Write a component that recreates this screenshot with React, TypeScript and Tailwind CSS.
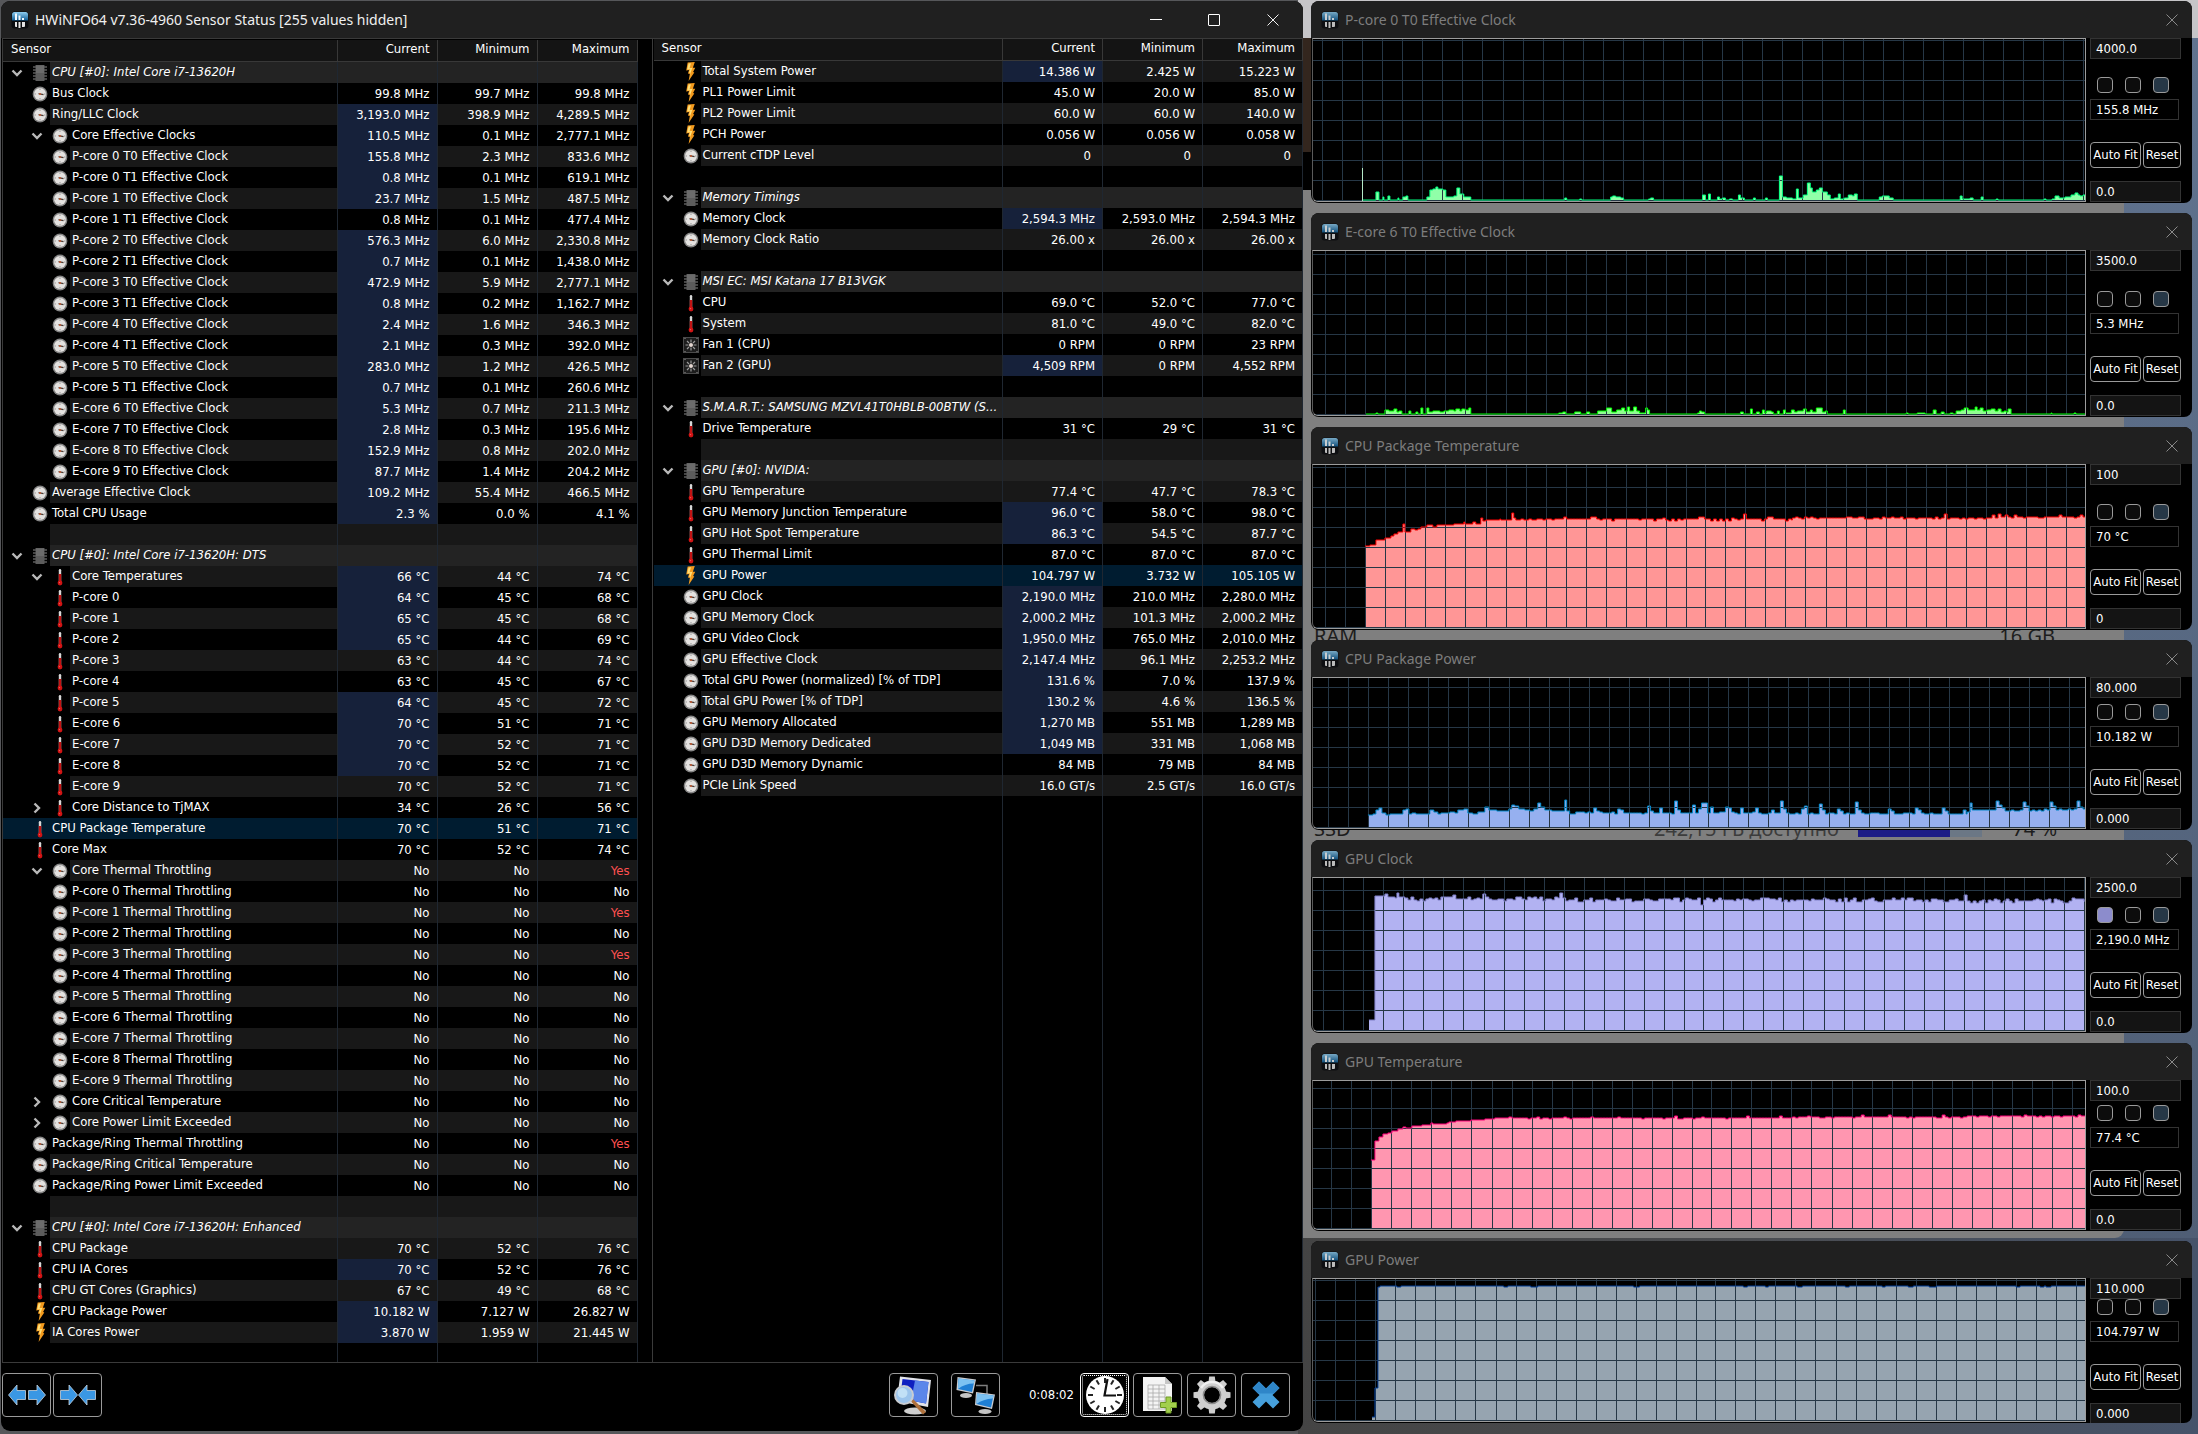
import React from "react";

/* ---------- sensor data: level | icon | name | current | minimum | maximum | flags ----------
   icons: h = chip heading, c = clock, t = thermometer, p = power, f = fan
   flags: b = highlighted current value, v = expanded, > = collapsed, s = selected, w = warning maximum */

const LEFT = `0|h|CPU [#0]: Intel Core i7-13620H||||v
0|c|Bus Clock|99.8 MHz|99.7 MHz|99.8 MHz|
0|c|Ring/LLC Clock|3,193.0 MHz|398.9 MHz|4,289.5 MHz|b
1|c|Core Effective Clocks|110.5 MHz|0.1 MHz|2,777.1 MHz|bv
1|c|P-core 0 T0 Effective Clock|155.8 MHz|2.3 MHz|833.6 MHz|b
1|c|P-core 0 T1 Effective Clock|0.8 MHz|0.1 MHz|619.1 MHz|b
1|c|P-core 1 T0 Effective Clock|23.7 MHz|1.5 MHz|487.5 MHz|b
1|c|P-core 1 T1 Effective Clock|0.8 MHz|0.1 MHz|477.4 MHz|
1|c|P-core 2 T0 Effective Clock|576.3 MHz|6.0 MHz|2,330.8 MHz|b
1|c|P-core 2 T1 Effective Clock|0.7 MHz|0.1 MHz|1,438.0 MHz|b
1|c|P-core 3 T0 Effective Clock|472.9 MHz|5.9 MHz|2,777.1 MHz|b
1|c|P-core 3 T1 Effective Clock|0.8 MHz|0.2 MHz|1,162.7 MHz|b
1|c|P-core 4 T0 Effective Clock|2.4 MHz|1.6 MHz|346.3 MHz|b
1|c|P-core 4 T1 Effective Clock|2.1 MHz|0.3 MHz|392.0 MHz|b
1|c|P-core 5 T0 Effective Clock|283.0 MHz|1.2 MHz|426.5 MHz|b
1|c|P-core 5 T1 Effective Clock|0.7 MHz|0.1 MHz|260.6 MHz|b
1|c|E-core 6 T0 Effective Clock|5.3 MHz|0.7 MHz|211.3 MHz|b
1|c|E-core 7 T0 Effective Clock|2.8 MHz|0.3 MHz|195.6 MHz|b
1|c|E-core 8 T0 Effective Clock|152.9 MHz|0.8 MHz|202.0 MHz|b
1|c|E-core 9 T0 Effective Clock|87.7 MHz|1.4 MHz|204.2 MHz|b
0|c|Average Effective Clock|109.2 MHz|55.4 MHz|466.5 MHz|b
0|c|Total CPU Usage|2.3 %|0.0 %|4.1 %|b
-
0|h|CPU [#0]: Intel Core i7-13620H: DTS||||v
1|t|Core Temperatures|66 °C|44 °C|74 °C|bv
1|t|P-core 0|64 °C|45 °C|68 °C|b
1|t|P-core 1|65 °C|45 °C|68 °C|b
1|t|P-core 2|65 °C|44 °C|69 °C|b
1|t|P-core 3|63 °C|44 °C|74 °C|
1|t|P-core 4|63 °C|45 °C|67 °C|
1|t|P-core 5|64 °C|45 °C|72 °C|b
1|t|E-core 6|70 °C|51 °C|71 °C|b
1|t|E-core 7|70 °C|52 °C|71 °C|b
1|t|E-core 8|70 °C|52 °C|71 °C|b
1|t|E-core 9|70 °C|52 °C|71 °C|
1|t|Core Distance to TjMAX|34 °C|26 °C|56 °C|>
0|t|CPU Package Temperature|70 °C|51 °C|71 °C|s
0|t|Core Max|70 °C|52 °C|74 °C|
1|c|Core Thermal Throttling|No|No|Yes|vw
1|c|P-core 0 Thermal Throttling|No|No|No|
1|c|P-core 1 Thermal Throttling|No|No|Yes|w
1|c|P-core 2 Thermal Throttling|No|No|No|
1|c|P-core 3 Thermal Throttling|No|No|Yes|w
1|c|P-core 4 Thermal Throttling|No|No|No|
1|c|P-core 5 Thermal Throttling|No|No|No|
1|c|E-core 6 Thermal Throttling|No|No|No|
1|c|E-core 7 Thermal Throttling|No|No|No|
1|c|E-core 8 Thermal Throttling|No|No|No|
1|c|E-core 9 Thermal Throttling|No|No|No|
1|c|Core Critical Temperature|No|No|No|>
1|c|Core Power Limit Exceeded|No|No|No|>
0|c|Package/Ring Thermal Throttling|No|No|Yes|w
0|c|Package/Ring Critical Temperature|No|No|No|
0|c|Package/Ring Power Limit Exceeded|No|No|No|
-
0|h|CPU [#0]: Intel Core i7-13620H: Enhanced||||v
0|t|CPU Package|70 °C|52 °C|76 °C|
0|t|CPU IA Cores|70 °C|52 °C|76 °C|b
0|t|CPU GT Cores (Graphics)|67 °C|49 °C|68 °C|
0|p|CPU Package Power|10.182 W|7.127 W|26.827 W|b
0|p|IA Cores Power|3.870 W|1.959 W|21.445 W|b`;

const RIGHT = `0|p|Total System Power|14.386 W|2.425 W|15.223 W|b
0|p|PL1 Power Limit|45.0 W|20.0 W|85.0 W|
0|p|PL2 Power Limit|60.0 W|60.0 W|140.0 W|
0|p|PCH Power|0.056 W|0.056 W|0.058 W|
0|c|Current cTDP Level|0|0|0|
-
0|h|Memory Timings||||v
0|c|Memory Clock|2,594.3 MHz|2,593.0 MHz|2,594.3 MHz|b
0|c|Memory Clock Ratio|26.00 x|26.00 x|26.00 x|
-
0|h|MSI EC: MSI Katana 17 B13VGK||||v
0|t|CPU|69.0 °C|52.0 °C|77.0 °C|
0|t|System|81.0 °C|49.0 °C|82.0 °C|
0|f|Fan 1 (CPU)|0 RPM|0 RPM|23 RPM|
0|f|Fan 2 (GPU)|4,509 RPM|0 RPM|4,552 RPM|b
-
0|h|S.M.A.R.T.: SAMSUNG MZVL41T0HBLB-00BTW (S...||||v
0|t|Drive Temperature|31 °C|29 °C|31 °C|
-
0|h|GPU [#0]: NVIDIA:||||v
0|t|GPU Temperature|77.4 °C|47.7 °C|78.3 °C|
0|t|GPU Memory Junction Temperature|96.0 °C|58.0 °C|98.0 °C|b
0|t|GPU Hot Spot Temperature|86.3 °C|54.5 °C|87.7 °C|b
0|t|GPU Thermal Limit|87.0 °C|87.0 °C|87.0 °C|
0|p|GPU Power|104.797 W|3.732 W|105.105 W|s
0|c|GPU Clock|2,190.0 MHz|210.0 MHz|2,280.0 MHz|b
0|c|GPU Memory Clock|2,000.2 MHz|101.3 MHz|2,000.2 MHz|b
0|c|GPU Video Clock|1,950.0 MHz|765.0 MHz|2,010.0 MHz|b
0|c|GPU Effective Clock|2,147.4 MHz|96.1 MHz|2,253.2 MHz|b
0|c|Total GPU Power (normalized) [% of TDP]|131.6 %|7.0 %|137.9 %|b
0|c|Total GPU Power [% of TDP]|130.2 %|4.6 %|136.5 %|b
0|c|GPU Memory Allocated|1,270 MB|551 MB|1,289 MB|b
0|c|GPU D3D Memory Dedicated|1,049 MB|331 MB|1,068 MB|b
0|c|GPU D3D Memory Dynamic|84 MB|79 MB|84 MB|
0|c|PCIe Link Speed|16.0 GT/s|2.5 GT/s|16.0 GT/s|`;

/* ---------- icons ---------- */

function AppIcon({ dim }: { dim?: boolean }) {
  return (
    <svg viewBox="0 0 18 18" className={dim ? "size-[18px] shrink-0 opacity-80" : "size-[18px] shrink-0"} aria-hidden="true">
      <defs>
        <linearGradient id="app-top" x1="0" y1="0" x2="0" y2="1">
          <stop offset="0" stopColor="#8ecdf0" />
          <stop offset="1" stopColor="#0f5b92" />
        </linearGradient>
      </defs>
      <rect x="0.5" y="0.5" width="17" height="17" rx="3" fill="#0a0c0f" />
      <path d="M1 9.500V3.500Q1 1 3.500 1h11Q17 1 17 3.500v6z" fill="url(#app-top)" />
      <path d="M4 2.500h2V9H4zM7.500 4.500h2V9h-2zM11 7h2v2h-2z" fill="#f2f9fd" />
      <path d="M4 11h2v5H5q-1 0-1-1zM7.500 11h2v6h-2zM11 11h3v4q0 1-1 1h-2z" fill="#e4e4e4" />
    </svg>
  );
}

function ChipIcon() {
  return (
    <svg viewBox="0 0 14 18" className="h-[18px] w-[14px]" aria-hidden="true">
      <path d="M0 3h14M0 6h14M0 9h14M0 12h14M0 15h14" stroke="#8a8a8a" strokeWidth="1.200" />
      <rect x="2.500" y="1" width="9" height="16" fill="#5c5c5c" />
      <path d="M3 1.500h8V9H3z" fill="#6b6b6b" />
    </svg>
  );
}

function ClockIcon() {
  return (
    <svg viewBox="0 0 16 16" className="size-4" aria-hidden="true">
      <circle cx="8" cy="8" r="7.400" fill="#858585" />
      <circle cx="8" cy="8" r="6" fill="#e4e2e0" />
      <path d="M8 2.500v1.500M8 12v1.500M2.500 8H4M12 8h1.500" stroke="#999" strokeWidth="1" />
      <path d="M6.500 7.600 11.500 8.600" stroke="#4a3a32" strokeWidth="1.300" />
      <circle cx="8" cy="8" r="1" fill="#c4572f" />
    </svg>
  );
}

function ThermometerIcon() {
  return (
    <svg viewBox="0 0 6 18" className="h-[18px] w-[6px]" aria-hidden="true">
      <rect x="1.800" y="1" width="2.400" height="13" rx="1.200" fill="#d8d8d8" />
      <rect x="1.800" y="6" width="2.400" height="9" fill="#c41414" />
      <circle cx="3" cy="15" r="2.400" fill="#d01414" />
      <circle cx="2.500" cy="14.600" r="0.700" fill="#f06060" />
    </svg>
  );
}

function BoltIcon() {
  return (
    <svg viewBox="0 0 11 20" className="h-[19px] w-[11px]" aria-hidden="true">
      <path d="M2.500 0.500 10 0 8 6h2.500L8.200 10.500 9.500 11 3.500 20l1.300-7.500L2.800 12 4 8.500 1 9z" fill="#f39a1d" />
      <path d="M3.500 1.500 6 1.300 4.500 6.500l3-.5-2.500 7 .5.500-1 4 1.200-6L3.800 11l1.500-3.500L2 8z" fill="#ffe07a" />
    </svg>
  );
}

function FanIcon() {
  return (
    <svg viewBox="0 0 16 16" className="size-4" aria-hidden="true">
      <rect x="0.500" y="0.500" width="15" height="15" fill="#1d1d1d" stroke="#4b4b4b" />
      <path d="M8 2.500v3M8 10.500v3M2.500 8h3M10.500 8h3M4 4l2 2M10 10l2 2M12 4l-2 2M6 10l-2 2" stroke="#9a9a9a" strokeWidth="1.200" />
      <circle cx="8" cy="8" r="2" fill="#e6d8d2" />
      <path d="M1.500 1.500h1M13.500 1.500h1M1.500 14.500h1M13.500 14.500h1" stroke="#999" />
    </svg>
  );
}

function Chevron({ open }: { open: boolean }) {
  return (
    <svg viewBox="0 0 12 12" className="size-3" fill="none" stroke="#b9b9b9" strokeWidth="2.400" aria-hidden="true">
      <path d={open ? "M1.500 3.500 6 8l4.500-4.500" : "M3.500 1.500 8 6l-4.500 4.500"} />
    </svg>
  );
}

function CloseGlyph({ size }: { size: string }) {
  return (
    <svg viewBox="0 0 12 12" className={size} fill="none" stroke="currentColor" strokeWidth="1" aria-hidden="true">
      <path d="M0.500 0.500l11 11M11.500 0.500l-11 11" />
    </svg>
  );
}

function RowIcon({ kind }: { kind: string }) {
  if (kind === "h") return <ChipIcon />;
  if (kind === "c") return <ClockIcon />;
  if (kind === "t") return <ThermometerIcon />;
  if (kind === "p") return <BoltIcon />;
  return <FanIcon />;
}

/* ---------- sensor table ---------- */

const LINE = "border-r border-[#1f2731]";
const VALUE_COLS = [0, 1, 2];

function SensorRow({ line, index }: { line: string; index: number }) {
  const shade = index % 2 === 0 ? "bg-[#181818]" : "bg-black";
  if (line === "-") {
    return (
      <tr className="h-[21px]">
        <td className={"p-0 " + LINE}>
          <div className={"ml-[47px] h-[21px] " + shade} />
        </td>
        {VALUE_COLS.map((c) => (
          <td key={c} className={LINE + " " + shade} />
        ))}
      </tr>
    );
  }
  const [level, icon, name, cur, min, max, flags] = line.split("|");
  const heading = icon === "h";
  const selected = flags.includes("s");
  const tone = selected ? "" : heading ? "bg-[#232323]" : shade;
  const open = flags.includes("v");
  const toggles = open || flags.includes(">");
  return (
    <tr className={selected ? "h-[21px] bg-[#001c30]" : "h-[21px]"}>
      <td className={"p-0 " + LINE}>
        <div className="flex h-[21px] items-center">
          <span className={level === "1" ? "flex w-[47px] shrink-0 justify-end pr-[7px]" : "flex w-[27px] shrink-0 justify-end pr-[7px]"}>
            {toggles && (
              <button type="button" className="block" aria-expanded={open} aria-label={"Toggle " + name}>
                <Chevron open={open} />
              </button>
            )}
          </span>
          <span className="flex w-5 shrink-0 items-center justify-center">
            <RowIcon kind={icon} />
          </span>
          <span className={"h-[21px] min-w-0 flex-1 whitespace-nowrap pl-[2px] leading-5 " + (heading ? "italic " : "") + tone}>{name}</span>
        </div>
      </td>
      {[cur, min, max].map((v, i) => (
        <td
          key={i}
          className={
            "whitespace-nowrap py-0 text-right leading-5 " + LINE + " " +
            (v === "0" ? "pr-[11px] " : "pr-[7px] ") +
            (i === 0 && flags.includes("b") ? "bg-[#16213a] " : tone + " ") +
            (i === 2 && flags.includes("w") ? "text-[#ff5050]" : "")
          }
        >
          {v}
        </td>
      ))}
    </tr>
  );
}

const HEAD = "border-b border-r border-[#383838] pb-1 pt-0 font-normal leading-4";

function SensorTable({ rows, label }: { rows: string; label: string }) {
  return (
    <table className="h-full w-full table-fixed border-separate border-spacing-0" aria-label={label}>
      <colgroup>
        <col />
        <col className="w-[100px]" />
        <col className="w-[100px]" />
        <col className="w-[100px]" />
      </colgroup>
      <thead>
        <tr className="h-[22px] bg-[#141414] text-right">
          <th scope="col" className={HEAD + " pl-2 text-left"}>Sensor</th>
          <th scope="col" className={HEAD + " pr-[7px]"}>Current</th>
          <th scope="col" className={HEAD + " pr-[7px]"}>Minimum</th>
          <th scope="col" className={HEAD + " pr-[7px]"}>Maximum</th>
        </tr>
      </thead>
      <tbody>
        {rows.split("\n").map((r, i) => (
          <SensorRow key={i} line={r} index={i} />
        ))}
        <tr>
          <td className={LINE} />
          {VALUE_COLS.map((c) => (
            <td key={c} className={LINE} />
          ))}
        </tr>
      </tbody>
    </table>
  );
}

/* ---------- toolbar ---------- */

function ToolButton({ label, active, children }: { label: string; active?: boolean; children: React.ReactNode }) {
  return (
    <button
      type="button"
      aria-label={label}
      className={
        "flex h-11 w-[49px] shrink-0 items-center justify-center rounded-[4px] border bg-black " +
        (active ? "border-white outline-1 -outline-offset-3 outline-dotted outline-white" : "border-[#9a9a9a]")
      }
    >
      {children}
    </button>
  );
}

const ARROW_L = "M0.500 11 9 1v5.500h8.500v9H9V21z";
const ARROW_R = "M17.500 11 9 1v5.500H0.500v9H9V21z";

function Toolbar() {
  return (
    <div className="flex h-[68px] items-start pl-px pr-[13px] pt-[10px]">
      <div className="flex gap-[2px]">
        <ToolButton label="Expand columns">
          <svg viewBox="0 0 40 22" className="h-[22px] w-10" fill="#3a97e4" stroke="#c8d4de" strokeWidth="0.800">
            <path d={ARROW_L} transform="translate(1 0)" />
            <path d={ARROW_R} transform="translate(21 0)" />
          </svg>
        </ToolButton>
        <ToolButton label="Shrink columns">
          <svg viewBox="0 0 40 22" className="h-[22px] w-10" fill="#3a97e4" stroke="#c8d4de" strokeWidth="0.800">
            <path d={ARROW_R} transform="translate(2 0)" />
            <path d={ARROW_L} transform="translate(20 0)" />
          </svg>
        </ToolButton>
      </div>
      <div className="ml-auto flex items-center">
        <ToolButton label="Show summary">
          <svg viewBox="0 0 40 40" className="size-10">
            <ellipse cx="21" cy="36" rx="11" ry="3.500" fill="#d0d0d0" />
            <path d="M6 1.500 37 5l-3 27L3 26z" fill="#e2e4ea" />
            <path d="M8.500 4 34.500 7l-2.500 21.500L6 23.500z" fill="#0f1fc0" />
            <path d="M21 5.500 34.500 7 32 28.500 17 25.500z" fill="#5b86ea" />
            <path d="M19 24 32 37l-3 2.500-12-13z" fill="#b0713c" />
            <circle cx="10" cy="20" r="9" fill="#9cc4ec" stroke="#c9cdd2" strokeWidth="2" />
            <circle cx="8.500" cy="18" r="5" fill="#c2e0f6" />
          </svg>
        </ToolButton>
        <span className="w-[13px]" />
        <ToolButton label="Remote monitoring">
          <svg viewBox="0 0 40 40" className="size-10">
            <path d="M20 10.500h11V20" fill="none" stroke="#7e7e7e" strokeWidth="1.500" />
            <ellipse cx="10" cy="20.500" rx="6" ry="2.500" fill="#c4c4c4" />
            <path d="M1.500 2 20 4.500 17 18.500 0.500 15z" fill="#c9ccd0" />
            <path d="M2.500 3.500 18.500 5.500 16 17 2 14z" fill="#1f7fd4" />
            <path d="M2.500 3.500 18.500 5.500 17.800 8.500Q9 8.500 2 14z" fill="#7cc2f2" />
            <ellipse cx="29" cy="36.500" rx="6.500" ry="2.500" fill="#c4c4c4" />
            <path d="M20 17 39 19.500 36 34 19 30z" fill="#c9ccd0" />
            <path d="M21 18.500 37.500 20.500 35 32.500 20.500 29z" fill="#1f7fd4" />
            <path d="M21 18.500 37.500 20.500 36.800 23.500Q27 24 20.500 29z" fill="#7cc2f2" />
          </svg>
        </ToolButton>
        <time className="w-20 pr-[6px] text-right text-[13px] leading-5">0:08:02</time>
        <ToolButton label="Reset clock" active>
          <svg viewBox="0 0 40 40" className="size-10">
            <circle cx="20" cy="20" r="19" fill="#fff" />
            <g stroke="#222" strokeWidth="2">
              {[0, 1, 2, 3, 4, 5, 6, 7, 8, 9, 10, 11].map((n) => (
                <path key={n} d="M20 3v5" transform={"rotate(" + n * 30 + " 20 20)"} />
              ))}
            </g>
            <path d="M22.500 4 19.500 20.500H31" fill="none" stroke="#111" strokeWidth="2.200" />
          </svg>
        </ToolButton>
        <span className="w-[4px]" />
        <ToolButton label="Start logging">
          <svg viewBox="0 0 40 40" className="size-10">
            <path d="M5 2h22l7 7v27H5z" fill="#f4f4f4" />
            <path d="M27 2v7h7z" fill="#c6c6c6" />
            <path d="M10 10h17M10 14h17M10 18h17M10 22h17M10 26h17M10 30h17M10 34h17M10 10v24M15 10v24M21 10v24M27 10v24" stroke="#a9a9a9" strokeWidth="0.800" />
            <path d="M28 22h5v5.500h5.500v5H33V38h-5v-5.500h-5.500v-5H28z" fill="#a2cf4c" stroke="#6f9a26" />
          </svg>
        </ToolButton>
        <span className="w-[5px]" />
        <ToolButton label="Configure sensors">
          <svg viewBox="0 0 40 40" className="size-10">
            <g fill="#cfcfcf">
              {[0, 1, 2, 3, 4, 5, 6, 7].map((n) => (
                <path key={n} d="M16.500 7 17.200 1.500h5.600L23.500 7z" transform={"rotate(" + n * 45 + " 20 20)"} />
              ))}
            </g>
            <circle cx="20" cy="20" r="11.300" fill="none" stroke="#cfcfcf" strokeWidth="6.500" />
            <circle cx="20" cy="20" r="8.600" fill="none" stroke="#8c8c8c" strokeWidth="1.500" />
            <path d="M9 13a13 13 0 0 1 22 0" fill="none" stroke="#f0f0f0" strokeWidth="2.500" />
          </svg>
        </ToolButton>
        <span className="w-[5px]" />
        <ToolButton label="Close sensors">
          <svg viewBox="0 0 40 40" className="size-10">
            <path d="M13 6.500 20 13.500 27 6.500 33.500 13 26.500 20 33.500 27 27 33.500 20 26.500 13 33.500 6.500 27 13.500 20 6.500 13z" fill="#46a0dc" />
            <path d="M13 6.500 20 13.500 27 6.500 33.500 13 28 18.500H12L6.500 13z" fill="#2f86c8" />
          </svg>
        </ToolButton>
      </div>
    </div>
  );
}

/* ---------- main window ---------- */

function SensorWindow() {
  return (
    <section className="z-10 mb-[3px] ml-px flex min-w-0 flex-[1302] flex-col overflow-hidden rounded-[9px] bg-black">
      <header className="flex h-[37px] items-center bg-[#202020] pl-[10px] text-[#f0f0f0]">
        <AppIcon />
        <h1 className="ml-[6px] flex-1 font-['Noto_Sans',sans-serif] text-sm">HWiNFO64 v7.36-4960 Sensor Status [255 values hidden]</h1>
        <button type="button" aria-label="Minimize" className="flex h-full w-[58px] items-center justify-center">
          <span className="h-px w-3 bg-white" />
        </button>
        <button type="button" aria-label="Maximize" className="flex h-full w-[58px] items-center justify-center">
          <span className="size-3 rounded-[1px] border border-white" />
        </button>
        <button type="button" aria-label="Close" className="flex h-full w-[60px] items-center justify-center">
          <CloseGlyph size="size-3" />
        </button>
      </header>
      <div className="grid flex-1 grid-cols-2 pl-px text-[13px]">
        <div className="min-w-0 border border-[#3a3a3a] pr-[14px] pt-px">
          <SensorTable rows={LEFT} label="Processor sensors" />
        </div>
        <div className="min-w-0 border-y border-[#3a3a3a] pl-px">
          <SensorTable rows={RIGHT} label="System and graphics sensors" />
        </div>
      </div>
      <Toolbar />
    </section>
  );
}

/* ---------- graphs ---------- */

type Graph = {
  title: string;
  max: string;
  value: string;
  min: string;
  size: string;
  h: number;
  gx: number;
  line: string;
  fill: string;
  swatch?: boolean;
  data: number[];
  firstSpike?: number;
};

const W = 773;

/* Small, repeatable ripple between two x positions, with named peaks on top. */
function ripple(from: number, to: number, base: number, levels: number[], peaks: number[] = []) {
  const out: number[] = [];
  let seed = from * 7 + base;
  for (let x = from; x < to; x += 3) {
    seed = (seed * 1103 + 12345) % 65536;
    const step = levels[Math.floor((seed / 65536) * levels.length)];
    const p = peaks.findIndex((v, i) => i % 2 === 0 && Math.abs(v - x) < 2);
    out.push(x, p >= 0 ? peaks[p + 1] : base + step);
  }
  return out;
}

const CORE0 = [
  49, 1, 63, 9, 66, 1, 70, 4, 71, 1, 75, 5, 77, 1, 85, 3, 86, 1, 90, 4, 93, 5, 95, 1, 114, 4, 117, 11, 120, 12, 123, 14, 125, 12, 130, 11,
  133, 4, 141, 5, 144, 13, 147, 7, 151, 4, 158, 1, 252, 3, 254, 1, 267, 2, 269, 1, 298, 4, 300, 5, 303, 4, 308, 3, 311, 1, 336, 2, 338, 3,
  341, 1, 390, 6, 393, 1, 396, 7, 398, 1, 405, 4, 407, 2, 410, 3, 413, 1, 417, 2, 420, 1, 426, 6, 428, 3, 432, 1, 441, 3, 443, 1, 453, 3,
  455, 1, 467, 25, 470, 4, 474, 3, 480, 2, 484, 12, 486, 3, 491, 6, 495, 18, 498, 13, 500, 9, 504, 11, 507, 13, 510, 9, 515, 6, 518, 2,
  522, 3, 526, 7, 528, 2, 532, 3, 536, 6, 540, 5, 542, 7, 545, 1, 567, 4, 570, 5, 577, 3, 581, 1, 648, 5, 650, 2, 658, 3, 661, 1, 669, 4,
  671, 1, 684, 2, 686, 1, 732, 2, 734, 1, 740, 2, 743, 5, 747, 3, 753, 4, 759, 6, 763, 8, 766, 6, 768, 5, 771, 6,
];

const CORE6 = [
  53, 1, 63, 2, 65, 1, 72, 5, 76, 4, 81, 6, 84, 3, 86, 4, 89, 1, 96, 4, 98, 1, 103, 3, 105, 1, 108, 7, 110, 1, 114, 7, 116, 3, 120, 4,
  127, 3, 131, 4, 136, 5, 141, 4, 143, 6, 147, 4, 149, 6, 152, 5, 156, 7, 158, 1, 246, 2, 250, 3, 253, 1, 262, 3, 268, 1, 274, 3, 277, 1,
  285, 4, 294, 7, 299, 3, 304, 5, 309, 7, 312, 4, 315, 8, 317, 4, 321, 8, 324, 4, 327, 2, 333, 7, 335, 5, 337, 1, 385, 2, 387, 4, 389, 3,
  392, 1, 428, 3, 431, 1, 438, 6, 440, 1, 444, 3, 447, 1, 450, 5, 452, 2, 454, 4, 459, 3, 461, 1, 465, 4, 467, 1, 471, 5, 473, 2, 479, 5,
  482, 3, 485, 4, 491, 6, 494, 3, 498, 5, 500, 3, 504, 7, 510, 3, 513, 4, 515, 1, 531, 5, 533, 1, 594, 2, 596, 1, 605, 2, 613, 1, 621, 5,
  624, 1, 629, 3, 632, 1, 638, 2, 641, 1, 644, 4, 649, 5, 652, 7, 656, 5, 663, 8, 665, 5, 668, 7, 671, 4, 675, 5, 679, 6, 683, 4, 686, 6,
  689, 3, 692, 4, 694, 3, 696, 6, 699, 1, 739, 2, 740, 1, 762, 2, 764, 1,
];

const PKG_TEMP = [
  52, 82, 57, 83, 63, 88, 72, 90, 78, 92, 81, 94, 85, 96, 90, 104, 92, 96, 98, 99, 102, 98, 105, 99, 108, 101, 114, 103, 120, 101, 124, 103,
  141, 104, 151, 106, 152, 104, 160, 106, 163, 104, 168, 110, 170, 107, 173, 108, 187, 109, 188, 108, 199, 115, 201, 110, 203, 108,
  208, 109, 211, 108, 216, 109, 219, 108, 224, 109, 230, 108,
  ...ripple(233, 480, 109, [-2, -1, 0, 0, 0, 0, 0, 1], [251, 111, 278, 111, 281, 111, 386, 111, 389, 111, 430, 114, 455, 111, 458, 111]),
  ...ripple(480, 620, 110, [-1, 0, 0, 0, 0, 1]),
  ...ripple(620, 690, 110, [-1, 0, 0, 1, 0], [632, 114, 680, 113, 686, 114]),
  ...ripple(690, 774, 111, [-1, 0, 0, 0, 0, 0], [693, 113, 702, 113, 747, 113, 768, 113]),
];

const PKG_POWER = [
  55, 13, 60, 14, 63, 18, 66, 20, 69, 15, 73, 13, 77, 14, 90, 18, 93, 19, 96, 14, 99, 15, 103, 14, 117, 18, 121, 16, 125, 14, 128, 15, 137, 16,
  142, 15, 145, 18, 151, 19, 155, 15, 160, 14, 165, 16, 172, 21, 176, 18, 184, 17, 196, 19, 199, 23, 202, 22, 206, 19, 212, 18, 217, 17,
  221, 19, 225, 25, 228, 21, 232, 18, 239, 17, 252, 28, 254, 17, 257, 14,
  ...ripple(260, 450, 15, [-1, 0, 0, 0, 0, 1], [
    281, 20, 284, 17, 305, 19, 308, 18, 335, 22, 338, 17, 347, 20, 362, 27, 365, 18, 380, 23, 386, 19, 389, 25, 391, 25, 398, 21, 413, 21, 416, 20, 428, 20, 443, 20,
  ]),
  ...ripple(450, 655, 14, [0, 0, 0, 1, 1], [
    459, 18, 468, 27, 471, 19, 489, 19, 492, 22, 507, 24, 510, 18, 525, 19, 528, 17, 543, 26, 546, 18, 576, 19, 579, 17, 604, 20, 606, 18, 630, 20, 632, 17, 651, 18,
  ]),
  655, 16, 658, 25, 660, 18,
  ...ripple(663, 774, 18, [-1, 0, 0, 0, 1], [684, 27, 687, 23, 690, 20, 711, 26, 714, 22, 738, 26, 741, 22, 765, 27, 768, 21, 771, 19]),
];

const GPU_CLOCK = [
  56, 11, 62, 135, 72, 137, 75, 134, 82, 133, 84, 138, 86, 134,
  ...ripple(89, 247, 132, [-2, -1, 0, 0, 0, 1, 2], [140, 136, 170, 137, 173, 134]),
  247, 138, 250, 133,
  ...ripple(253, 640, 131, [-2, -1, 0, 0, 0, 1, 2], [388, 126]),
  ...ripple(640, 774, 130, [-2, 0, 0, 0, 1, 2], [652, 136, 739, 128, 760, 133]),
];

const GPU_TEMP = [
  58, 69, 62, 88, 66, 92, 70, 95, 75, 96, 79, 98, 85, 100, 90, 102, 93, 101, 99, 103, 109, 104, 118, 106, 120, 105, 134, 106, 136, 107, 143, 108,
  158, 109, 172, 110, 182, 111, 196, 112, 199, 111,
  ...ripple(203, 480, 111, [-1, 0, 0, 0, 0, 0, 0], [225, 112, 252, 112, 279, 112, 306, 112, 361, 113, 388, 112, 433, 113, 466, 113]),
  ...ripple(480, 655, 112, [-1, 0, 0, 0, 0, 0], [496, 113, 550, 114, 577, 114, 631, 114]),
  ...ripple(655, 774, 113, [0, 0, 0, 0, 0, -1], [712, 114, 766, 114]),
];

const GPU_POWER = [
  59, 4, 62, 33, 65, 134, 67, 135, 84, 134, 88, 135, 191, 134, 195, 135, 218, 134, 225, 135, 321, 134, 327, 135, 431, 134, 435, 135, 453, 134,
  456, 135, 485, 134, 490, 135, 533, 134, 537, 135, 570, 134, 573, 135, 596, 134, 601, 135, 617, 134, 624, 135, 704, 134, 708, 135, 728, 134,
  732, 135, 734, 134, 739, 135,
];

const GRAPHS: Graph[] = [
  { title: "P-core 0 T0 Effective Clock", max: "4000.0", value: "155.8 MHz", min: "0.0", size: "h-[202px]", h: 162, gx: 9, line: "#00ff7f", fill: "#90ffa8", data: CORE0, firstSpike: 33 },
  { title: "E-core 6 T0 Effective Clock", max: "3500.0", value: "5.3 MHz", min: "0.0", size: "h-[204px]", h: 164, gx: 12, line: "#00ff00", fill: "#90ff90", data: CORE6 },
  { title: "CPU Package Temperature", max: "100", value: "70 °C", min: "0", size: "h-[203px]", h: 163, gx: 12, line: "#ff0000", fill: "#ff9696", data: PKG_TEMP },
  { title: "CPU Package Power", max: "80.000", value: "10.182 W", min: "0.000", size: "h-[190px]", h: 150, gx: 15, line: "#0087c8", fill: "#96b0f0", data: PKG_POWER },
  { title: "GPU Clock", max: "2500.0", value: "2,190.0 MHz", min: "0.0", size: "h-[193px]", h: 153, gx: 10, line: "#8080c8", fill: "#b2b2f2", swatch: true, data: GPU_CLOCK },
  { title: "GPU Temperature", max: "100.0", value: "77.4 °C", min: "0.0", size: "h-[188px]", h: 148, gx: 18, line: "#ff0078", fill: "#ff96b0", data: GPU_TEMP },
  { title: "GPU Power", max: "110.000", value: "104.797 W", min: "0.000", size: "h-[182px]", h: 142, gx: 2, line: "#003c96", fill: "#96a4b0", data: GPU_POWER },
];

function Chart({ g }: { g: Graph }) {
  const base = g.h;
  const pts: string[] = [];
  for (let i = 0; i < g.data.length; i += 2) {
    const x = g.data[i];
    const y = base - g.data[i + 1];
    const next = i + 2 < g.data.length ? g.data[i + 2] : W;
    pts.push(x + "," + y, next + "," + y);
  }
  const verticals: number[] = [];
  for (let x = g.gx; x < W; x += 20) verticals.push(x + Math.round(x / 340));
  const horizontals: number[] = [];
  for (let y = base - 1; y > 0; y -= 20) horizontals.push(y);
  const start = g.data[0];
  return (
    <svg viewBox={"0 0 " + W + " " + g.h} preserveAspectRatio="none" shapeRendering="crispEdges" className="block h-full w-full" role="img" aria-label={g.title + " graph"}>
      <polygon points={start + "," + base + " " + pts.join(" ") + " " + W + "," + base} fill={g.fill} />
      <g fill="#263746">
        {verticals.map((x) => (
          <rect key={x} x={x} y={0} width={1} height={g.h} />
        ))}
        {horizontals.map((y) => (
          <rect key={y} x={0} y={y} width={W} height={1} />
        ))}
      </g>
      <polyline points={pts.join(" ")} fill="none" stroke={g.line} strokeWidth={1} />
      {g.firstSpike && <rect x={start} y={base - g.firstSpike} width={1} height={g.firstSpike} fill="#b4e8c8" />}
    </svg>
  );
}

const FIELD = "block h-[21px] border border-[#333333] pl-[5px] text-[13px] leading-4 text-white outline-none";
const SMALL_BTN = "h-[26px] rounded-[4px] border border-[#9a9a9a] bg-black text-[13px] leading-5 whitespace-nowrap";
const SWATCH = "size-4 appearance-none rounded-[4px] border border-[#9a9a9a]";

function GraphWindow({ g }: { g: Graph }) {
  return (
    <section className={"flex flex-col overflow-hidden rounded-[8px] bg-black " + g.size}>
      <header className="flex h-[37px] shrink-0 items-center bg-[#202020] pl-[10px]">
        <AppIcon dim />
        <h2 className="ml-[6px] flex-1 font-['Noto_Sans',sans-serif] text-sm text-[#7d7d7d]">{g.title}</h2>
        <button type="button" aria-label={"Close " + g.title} className="flex h-full w-10 items-center justify-center text-[#8a8a8a]">
          <CloseGlyph size="size-3" />
        </button>
      </header>
      <div className="flex min-h-0 flex-1 pb-px pl-px">
        <div className="min-w-0 flex-1 overflow-hidden rounded-bl-[6px] border border-[#9c9c9c] border-l-[#5a5a5a]">
          <Chart g={g} />
        </div>
        <div className="flex w-[106px] shrink-0 flex-col justify-between pl-1">
          <input className={FIELD + " w-[91px] shrink-0 bg-[#141414]"} defaultValue={g.max} aria-label={g.title + " upper limit"} />
          <div>
            <div className="flex gap-3 pl-[7px]">
              <input type="checkbox" aria-label={g.title + " line color"} className={SWATCH + (g.swatch ? " bg-[#8c8ccc]" : " bg-[#0c0c0c]")} />
              <input type="checkbox" aria-label={g.title + " background color"} className={SWATCH + " bg-[#0c0c0c]"} />
              <input type="checkbox" aria-label={g.title + " grid color"} className={SWATCH + " bg-[#263746]"} />
            </div>
            <input readOnly className={FIELD + " mt-[6px] w-[89px] bg-black"} value={g.value} aria-label={g.title + " current value"} />
            <div className="mt-[22px] flex gap-[2px]">
              <button type="button" className={SMALL_BTN + " w-[51px]"}>Auto Fit</button>
              <button type="button" className={SMALL_BTN + " w-[38px]"}>Reset</button>
            </div>
            <input className={FIELD + " mt-[13px] w-[91px] bg-[#141414]"} defaultValue={g.min} aria-label={g.title + " lower limit"} />
          </div>
        </div>
      </div>
    </section>
  );
}

/* ---------- desktop behind the windows ---------- */

function Desktop() {
  return (
    <div className="absolute inset-0 overflow-hidden bg-[#56575a]">
      <div className="absolute right-0 top-[38px] h-full w-[900px] bg-linear-to-b from-[#60738f] to-[#4c5a70]" />
      <div className="absolute right-0 top-0 h-[38px] w-[900px] bg-[#c6c5c8]" />
      <div className="absolute right-[74px] top-[152px] h-[1086px] w-[823px] rounded-br-[9px] bg-[#7f7f7f]" />
      <div className="absolute right-[886px] top-[38px] h-[114px] w-[12px] bg-[#33261e]" />
      <div className="absolute right-[886px] top-[152px] h-[38px] w-[12px] bg-black" />
      <div className="absolute right-0 top-[1238px] h-[196px] w-[900px] bg-linear-to-r from-[#444444] via-[#4a4c50] to-[#46536a]" />
      <div className="absolute right-[74px] top-[624px] w-[811px] font-['Noto_Sans',sans-serif] text-[20px] leading-6 text-[#1d1d1d]">
        <span className="absolute left-px">RAM</span>
        <span className="absolute right-[69px]">16 GB</span>
      </div>
      <div className="absolute right-[74px] top-[817px] w-[811px] font-['Noto_Sans',sans-serif] text-[20px] leading-6 text-[#1d1d1d]">
        <span className="absolute left-px">SSD</span>
        <span className="absolute right-[285px] whitespace-nowrap text-[#3c3c3c]">242,15 ГБ доступно</span>
        <span className="absolute right-[142px] top-[9px] flex h-[11px] w-[124px] bg-[#6b7785]">
          <span className="w-[92px] bg-[#1c1c86]" />
        </span>
        <span className="absolute right-[67px]">74 %</span>
      </div>
    </div>
  );
}

export default function App() {
  return (
    <main className="relative flex min-h-screen gap-2 pr-[6px] pt-px font-['DejaVu_Sans_Condensed','DejaVu_Sans',sans-serif] text-white">
      <Desktop />
      <SensorWindow />
      <div className="z-10 flex min-w-0 flex-[881] flex-col gap-[10px]">
        {GRAPHS.map((g) => (
          <GraphWindow key={g.title} g={g} />
        ))}
      </div>
    </main>
  );
}
